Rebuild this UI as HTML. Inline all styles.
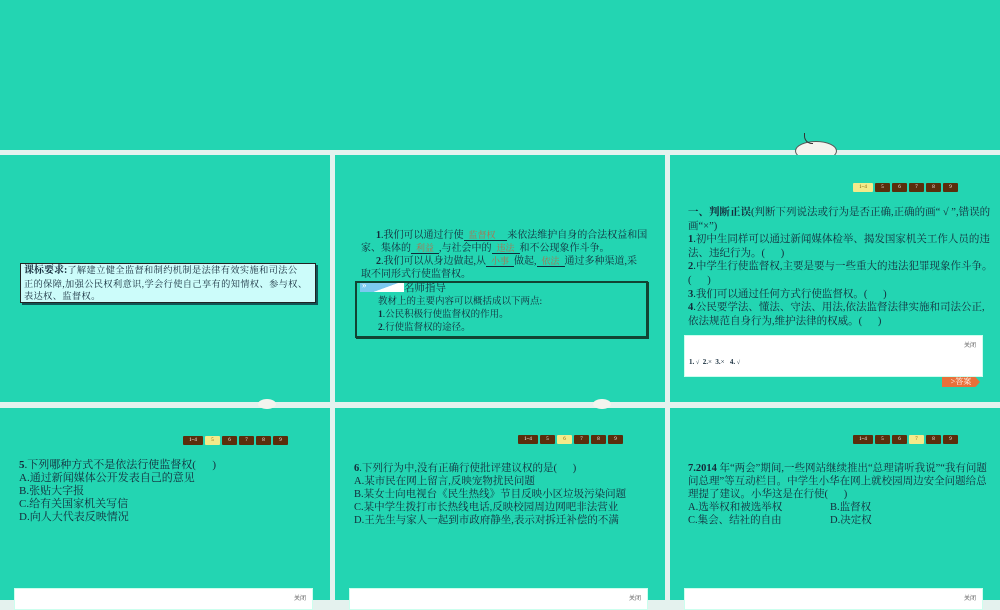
<!DOCTYPE html><html><head><meta charset="utf-8"><style>
body{margin:0;width:1000px;height:600px;background:#e4f2ee;position:relative;overflow:hidden;font-family:"Liberation Serif","Noto Serif CJK SC","Noto Sans CJK SC",serif;color:#142a3a}
.p{position:absolute;background:#23d5b2;overflow:hidden}
.a{position:absolute}
.t{font-size:11px;line-height:13px;white-space:nowrap}
.nav{position:absolute;height:9px;display:flex;gap:2px}
.nav span{width:15px;height:9px;background:#5a2e0c;color:#fff;font-size:5px;line-height:9px;text-align:center;border-radius:1px}
.nav span.f{width:20px}
.nav span.on{background:#f4ea8a;color:#7a5a00}
.box{position:absolute;background:#fff;border:1px solid #cfe}
.close{position:absolute;right:6px;top:4px;font-size:6px;color:#666;font-family:"Liberation Sans","Noto Sans CJK SC",sans-serif}
u{text-decoration:none;border-bottom:1px solid #142a3a;color:#b07050;padding:0 5px;font-size:9px}
</style></head><body>
<div class="p" style="left:0;top:0;width:1000px;height:150px"></div>
<div class="a" style="left:795px;top:141px;width:40px;height:18px;border-radius:50%;background:#f4f4ee;border:1px solid #555"></div>
<div class="a" style="left:804px;top:133px;width:8px;height:10px;border-left:1.5px solid #333;border-bottom:1.5px solid #333;border-radius:0 0 0 8px"></div>
<div class="p" style="left:0;top:155px;width:330px;height:247px"></div>
<div class="p" style="left:335px;top:155px;width:330px;height:247px"></div>
<div class="p" style="left:670px;top:155px;width:330px;height:247px"></div>
<div class="p" style="left:0;top:408px;width:330px;height:192px"></div>
<div class="p" style="left:335px;top:408px;width:330px;height:192px"></div>
<div class="p" style="left:670px;top:408px;width:330px;height:192px"></div>
<div class="a" style="left:258px;top:399px;width:18px;height:10px;border-radius:50%;background:#f4f4ee"></div>
<div class="a" style="left:593px;top:399px;width:18px;height:10px;border-radius:50%;background:#f4f4ee"></div>

<!-- panel 1 -->
<div class="a t" style="left:20px;top:263px;width:288px;height:38px;background:#ccfcfa;border:1px solid #222;box-shadow:2px 2px 0 #155;font-size:9.2px;line-height:12.5px;padding:0 3px;letter-spacing:0.4px"><b style="font-size:10px;letter-spacing:0">课标要求:</b>了解建立健全监督和制约机制是法律有效实施和司法公<br>正的保障,加强公民权利意识,学会行使自己享有的知情权、参与权、<br>表达权、监督权。</div>

<!-- panel 2 -->
<div class="a t" style="left:361px;top:229px;line-height:13px;font-size:10px">
<div>&nbsp;&nbsp;&nbsp;&nbsp;&nbsp;&nbsp;<b>1</b>.我们可以通过行使<u>监督权&nbsp;&nbsp;&nbsp;</u>来依法维护自身的合法权益和国</div>
<div>家、集体的<u>利益</u>,与社会中的<u>违法</u>和不公现象作斗争。</div>
<div>&nbsp;&nbsp;&nbsp;&nbsp;&nbsp;&nbsp;<b>2</b>.我们可以从身边做起,从<u>小事</u>做起,<u>依法</u>通过多种渠道,采</div>
<div>取不同形式行使监督权。</div></div>
<div class="a" style="left:355px;top:281px;width:289px;height:53px;border:2px solid #143;box-shadow:1px 1px 0 #143"></div>
<div class="a" style="left:360px;top:283px;width:44px;height:9px;background:linear-gradient(160deg,#7cc9f0 0 55%,#fff 56%)"></div>
<div class="a" style="left:362px;top:280px;font-size:9px;color:#fff">»</div>
<div class="a t" style="left:404px;top:282px;font-size:10.5px">名师指导</div>
<div class="a t" style="left:378px;top:296px;font-size:9.5px">教材上的主要内容可以概括成以下两点:</div>
<div class="a t" style="left:378px;top:309px;font-size:9.5px"><b>1</b>.公民积极行使监督权的作用。</div>
<div class="a t" style="left:378px;top:322px;font-size:9.5px"><b>2</b>.行使监督权的途径。</div>

<!-- panel 3 -->
<div class="nav" style="left:853px;top:183px"><span class="f on">1~4</span><span>5</span><span>6</span><span>7</span><span>8</span><span>9</span></div>
<div class="a t" style="left:688px;top:206px;font-size:10.5px;line-height:13.6px">
<div><b>一、判断正误</b>(判断下列说法或行为是否正确,正确的画“ √ ”,错误的</div>
<div>画“×”)</div>
<div><b>1</b>.初中生同样可以通过新闻媒体检举、揭发国家机关工作人员的违</div>
<div>法、违纪行为。(&nbsp;&nbsp;&nbsp;&nbsp;&nbsp;&nbsp;)</div>
<div><b>2</b>.中学生行使监督权,主要是要与一些重大的违法犯罪现象作斗争。</div>
<div>(&nbsp;&nbsp;&nbsp;&nbsp;&nbsp;&nbsp;)</div>
<div><b>3</b>.我们可以通过任何方式行使监督权。(&nbsp;&nbsp;&nbsp;&nbsp;&nbsp;&nbsp;)</div>
<div><b>4</b>.公民要学法、懂法、守法、用法,依法监督法律实施和司法公正,</div>
<div>依法规范自身行为,维护法律的权威。(&nbsp;&nbsp;&nbsp;&nbsp;&nbsp;&nbsp;)</div></div>
<div class="box" style="left:684px;top:335px;width:297px;height:40px"><div class="close">关闭</div><div class="a" style="left:4px;top:22px;font-size:7px"><b>1.</b> <small>√</small>&nbsp; <b>2.</b>× &nbsp;<b>3.</b>× &nbsp; <b>4.</b> <small>√</small></div></div>
<div class="a" style="left:942px;top:377px;width:38px;height:10px;background:#e8703a;color:#fff;font-size:8px;line-height:10px;text-align:center;clip-path:polygon(0 0,88% 0,100% 50%,88% 100%,0 100%)">&gt;答案</div>

<!-- panel 4 -->
<div class="nav" style="left:183px;top:436px"><span class="f">1~4</span><span class="on">5</span><span>6</span><span>7</span><span>8</span><span>9</span></div>
<div class="a t" style="left:19px;top:459px;font-size:11px"><b>5</b>.下列哪种方式不是依法行使监督权(&nbsp;&nbsp;&nbsp;&nbsp;&nbsp;&nbsp;)<br>A.通过新闻媒体公开发表自己的意见<br>B.张贴大字报<br>C.给有关国家机关写信<br>D.向人大代表反映情况</div>
<div class="box" style="left:14px;top:588px;width:297px;height:20px"><div class="close">关闭</div></div>

<!-- panel 5 -->
<div class="nav" style="left:518px;top:435px"><span class="f">1~4</span><span>5</span><span class="on">6</span><span>7</span><span>8</span><span>9</span></div>
<div class="a t" style="left:354px;top:462px;font-size:10.5px"><b>6</b>.下列行为中,没有正确行使批评建议权的是(&nbsp;&nbsp;&nbsp;&nbsp;&nbsp;&nbsp;)<br>A.某市民在网上留言,反映宠物扰民问题<br>B.某女士向电视台《民生热线》节目反映小区垃圾污染问题<br>C.某中学生拨打市长热线电话,反映校园周边网吧非法营业<br>D.王先生与家人一起到市政府静坐,表示对拆迁补偿的不满</div>
<div class="box" style="left:349px;top:588px;width:297px;height:20px"><div class="close">关闭</div></div>

<!-- panel 6 -->
<div class="nav" style="left:853px;top:435px"><span class="f">1~4</span><span>5</span><span>6</span><span class="on">7</span><span>8</span><span>9</span></div>
<div class="a t" style="left:688px;top:462px;font-size:10.5px">
<div><b>7.2014</b> 年“两会”期间,一些网站继续推出“总理请听我说”“我有问题</div>
<div>问总理”等互动栏目。中学生小华在网上就校园周边安全问题给总</div>
<div>理提了建议。小华这是在行使(&nbsp;&nbsp;&nbsp;&nbsp;&nbsp;&nbsp;)</div>
<div>A.选举权和被选举权<span style="position:absolute;left:142px">B.监督权</span></div>
<div>C.集会、结社的自由<span style="position:absolute;left:142px">D.决定权</span></div></div>
<div class="box" style="left:684px;top:588px;width:297px;height:20px"><div class="close">关闭</div></div>
</body></html>
